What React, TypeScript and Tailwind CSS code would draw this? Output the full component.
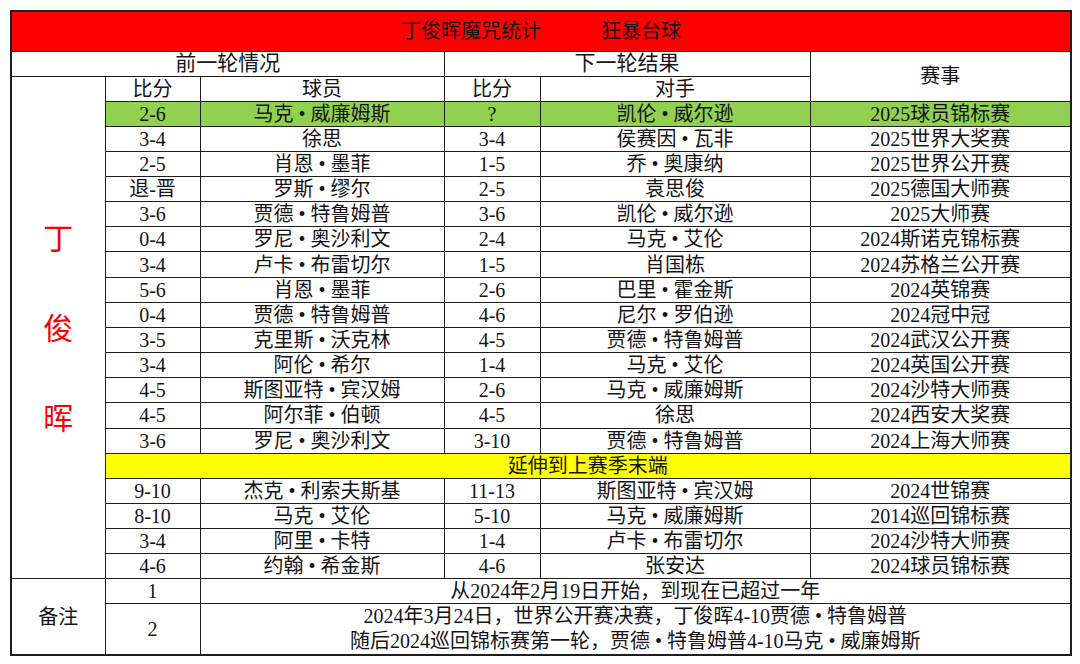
import React from "react";

const rowsA: string[][] = [
  ["3-4", "徐思", "3-4", "侯赛因 • 瓦非", "2025世界大奖赛"],
  ["2-5", "肖恩 • 墨菲", "1-5", "乔 • 奥康纳", "2025世界公开赛"],
  ["退-晋", "罗斯 • 缪尔", "2-5", "袁思俊", "2025德国大师赛"],
  ["3-6", "贾德 • 特鲁姆普", "3-6", "凯伦 • 威尔逊", "2025大师赛"],
  ["0-4", "罗尼 • 奥沙利文", "2-4", "马克 • 艾伦", "2024斯诺克锦标赛"],
  ["3-4", "卢卡 • 布雷切尔", "1-5", "肖国栋", "2024苏格兰公开赛"],
  ["5-6", "肖恩 • 墨菲", "2-6", "巴里 • 霍金斯", "2024英锦赛"],
  ["0-4", "贾德 • 特鲁姆普", "4-6", "尼尔 • 罗伯逊", "2024冠中冠"],
  ["3-5", "克里斯 • 沃克林", "4-5", "贾德 • 特鲁姆普", "2024武汉公开赛"],
  ["3-4", "阿伦 • 希尔", "1-4", "马克 • 艾伦", "2024英国公开赛"],
  ["4-5", "斯图亚特 • 宾汉姆", "2-6", "马克 • 威廉姆斯", "2024沙特大师赛"],
  ["4-5", "阿尔菲 • 伯顿", "4-5", "徐思", "2024西安大奖赛"],
  ["3-6", "罗尼 • 奥沙利文", "3-10", "贾德 • 特鲁姆普", "2024上海大师赛"],
];

const rowsB: string[][] = [
  ["9-10", "杰克 • 利索夫斯基", "11-13", "斯图亚特 • 宾汉姆", "2024世锦赛"],
  ["8-10", "马克 • 艾伦", "5-10", "马克 • 威廉姆斯", "2014巡回锦标赛"],
  ["3-4", "阿里 • 卡特", "1-4", "卢卡 • 布雷切尔", "2024沙特大师赛"],
  ["4-6", "约翰 • 希金斯", "4-6", "张安达", "2024球员锦标赛"],
];

const cell = "border border-[#1e1e1e] p-0 text-center align-middle leading-none";

function DataRow({ r, bg }: { r: string[]; bg?: string }) {
  return (
    <tr className={`h-[25.16px] ${bg ?? ""}`}>
      {r.map((v, i) => (
        <td key={i} className={cell}>
          {v}
        </td>
      ))}
    </tr>
  );
}

export default function App() {
  return (
    <div
      className="w-[1080px] h-[664px] bg-white p-[10px] text-[20px] text-[#141418]"
      style={{ fontFamily: '"Liberation Serif", "Noto Sans CJK SC", serif' }}
    >
      <table className="table-fixed border-collapse border-2 border-[#1e1e1e] w-[1060px]">
        <colgroup>
          <col className="w-[94px]" />
          <col className="w-[95px]" />
          <col className="w-[244px]" />
          <col className="w-[96px]" />
          <col className="w-[270px]" />
          <col className="w-[261px]" />
        </colgroup>
        <tbody>
          <tr className="h-[40px] bg-[#ff0000]">
            <td colSpan={6} className={cell}>
              <span>丁俊晖魔咒统计</span>
              <span className="ml-[60px]">狂暴台球</span>
            </td>
          </tr>
          <tr className="h-[25px]">
            <td colSpan={3} className={`${cell} text-[21px]`}>前一轮情况</td>
            <td colSpan={2} className={`${cell} text-[21px]`}>下一轮结果</td>
            <td rowSpan={2} className={cell}>赛事</td>
          </tr>
          <tr className="h-[25px]">
            <td rowSpan={20} className={cell}>
              <div className="flex flex-col items-center gap-[60px] pt-[4px] text-[30px] text-[#ff0000]">
                <span>丁</span>
                <span>俊</span>
                <span>晖</span>
              </div>
            </td>
            <td className={cell}>比分</td>
            <td className={cell}>球员</td>
            <td className={cell}>比分</td>
            <td className={cell}>对手</td>
          </tr>
          <DataRow
            r={["2-6", "马克 • 威廉姆斯", "?", "凯伦 • 威尔逊", "2025球员锦标赛"]}
            bg="bg-[#92d050]"
          />
          {rowsA.map((r, i) => (
            <DataRow key={i} r={r} />
          ))}
          <tr className="h-[25.16px] bg-[#ffff00]">
            <td colSpan={5} className={cell}>延伸到上赛季末端</td>
          </tr>
          {rowsB.map((r, i) => (
            <DataRow key={i} r={r} />
          ))}
          <tr className="h-[25px]">
            <td rowSpan={2} className={cell}>备注</td>
            <td className={cell}>1</td>
            <td colSpan={4} className={cell}>从2024年2月19日开始，到现在已超过一年</td>
          </tr>
          <tr className="h-[50px]">
            <td className={cell}>2</td>
            <td colSpan={4} className={cell}>
              <div className="flex flex-col">
                <div className="h-[25px] leading-[25px]">2024年3月24日，世界公开赛决赛，丁俊晖4-10贾德 • 特鲁姆普</div>
                <div className="h-[25px] leading-[25px]">随后2024巡回锦标赛第一轮，贾德 • 特鲁姆普4-10马克 • 威廉姆斯</div>
              </div>
            </td>
          </tr>
        </tbody>
      </table>
    </div>
  );
}
